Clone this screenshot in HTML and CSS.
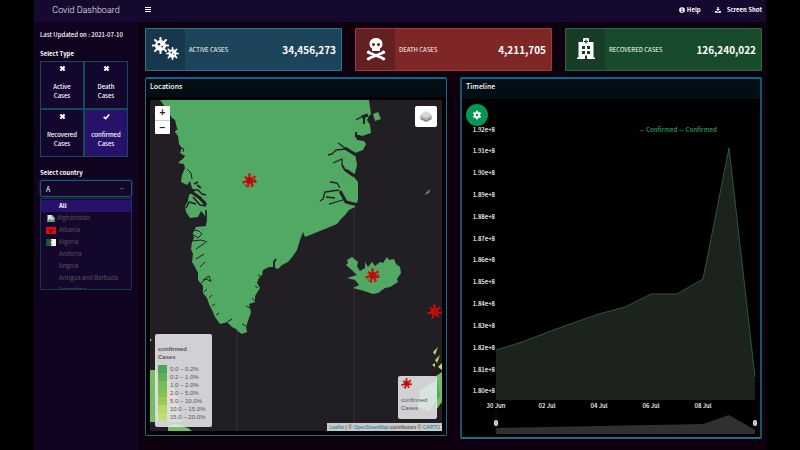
FILE: index.html
```html
<!DOCTYPE html>
<html lang="en">
<head>
<meta charset="utf-8">
<title>Covid Dashboard</title>
<link rel="stylesheet" href="styles.css">
</head>
<body>
<svg class="defs" aria-hidden="true">
  <symbol id="cross" viewBox="0 0 10 10"><path d="M2 2L8 8M8 2L2 8" stroke="#fff" stroke-width="3"/></symbol>
  <symbol id="tick" viewBox="0 0 10 10"><path d="M1 5.4L3.8 8L9 2.2" fill="none" stroke="#fff" stroke-width="2.4"/></symbol>
  <symbol id="virus" viewBox="-8 -8 16 16">
    <path d="M0 0L0 -7M0 0L5.500 -4M0 0L7 1.500M0 0L4 6M0 0L-2 6.500M0 0L-7 2M0 0L-5 -4" stroke="#cb0c0c" stroke-width="2.200"/>
    <path d="M-1.500 -6.800H1.500M4.800 -5.200L6.500 -3.200M6.900 0L6.500 2.600M-3.400 6.200L-.8 7M-7 .8L-6.400 3" stroke="#cb0c0c" stroke-width="1.500"/>
    <circle r="3.900" fill="#cb0c0c"/><path d="M-1 -2.500L.4 -.5L-1 2M2 0V1.600" stroke="#8d0a0a" fill="none"/>
    <path d="M5.500 -1.600V-.4M-4.600 4.200V5.400M2 5.800V6.800" stroke="#101010" stroke-width="1.200"/>
  </symbol>
  <symbol id="germ" viewBox="-10 -10 20 20">
    <path d="M0 -9V9M-9 0H9M-6.4 -6.4L6.4 6.4M6.4 -6.4L-6.4 6.4" stroke="#fff" stroke-width="2.4" stroke-linecap="round"/>
    <circle r="6.4" fill="#fff"/><circle cx="-1.8" cy="-1.4" r="1.5" fill="#17384c"/><circle cx="2" cy="1.4" r="1" fill="#17384c"/>
  </symbol>
</svg>
<div class="app">
  <header class="topbar">
    <h1 class="brand">Covid Dashboard</h1>
    <button class="menu" aria-label="Toggle menu"><svg viewBox="0 0 6 6"><path d="M0 .5H6M0 2.500H6M0 4.500H6" stroke="#fff" stroke-width="1"/></svg></button>
    <nav class="links">
      <a href="#help"><svg viewBox="0 0 12 12"><circle cx="6" cy="6" r="5.7" fill="#fff"/><path d="M4.6 5H6.4V9M4.4 9H7.8M5.2 3H6.8" stroke="#170930" stroke-width="1.5" fill="none"/></svg>Help</a>
      <a class="shot" href="#shot"><svg viewBox="0 0 12 12"><path d="M4.6 0H7.4V4H10L6 8L2 4H4.6ZM0 8H3.4L6 10L8.6 8H12V11.5H0Z" fill="#fff"/></svg>Screen Shot</a>
    </nav>
  </header>
  <div class="body">
    <aside class="side">
      <p class="updated">Last Updated on : 2021-07-10</p>
      <h2 class="label">Select Type</h2>
      <div class="types">
        <button><svg><use href="#cross"/></svg><span>Active<br>Cases</span></button>
        <button><svg><use href="#cross"/></svg><span>Death<br>Cases</span></button>
        <button><svg><use href="#cross"/></svg><span>Recovered<br>Cases</span></button>
        <button class="on"><svg><use href="#tick"/></svg><span>confirmed<br>Cases</span></button>
      </div>
      <label class="label country" for="country">Select country</label>
      <div class="combo">
        <input id="country" type="text" value="A" autocomplete="off">
        <ul class="options">
          <li class="picked"><span class="flag"></span>All</li>
          <li class="missing"><svg class="flag" viewBox="0 0 10 8"><path d="M1 0H6L9 3V8H1Z" fill="#d9e6ee"/><path d="M1 7L4 4L6 6L9 3V8H1Z" fill="#57a857"/><path d="M6 0V3H9" fill="#8895b5"/></svg>Afghanistan</li>
          <li><svg class="flag" viewBox="0 0 10 7"><path d="M0 0H10V7H0Z" fill="#d90b12"/><path d="M2.5 2L5 3L7.5 2L6.3 4L5 6L3.7 4Z" fill="#2a0408"/></svg>Albania</li>
          <li><svg class="flag" viewBox="0 0 10 7"><path d="M0 0H5V7H0Z" fill="#0c5c38"/><path d="M5 0H10V7H5Z" fill="#f1f1f1"/><path d="M6.2 2A1.8 1.8 0 1 0 6.2 5" fill="none" stroke="#c33"/></svg>Algeria</li>
          <li><span class="flag"></span>Andorra</li>
          <li><span class="flag"></span>Angola</li>
          <li><span class="flag"></span>Antigua and Barbuda</li>
          <li><span class="flag"></span>Argentina</li>
        </ul>
      </div>
    </aside>
    <main class="main">
      <section class="stats">
        <article class="stat active"><div class="pic"><svg viewBox="0 0 40 40"><use href="#germ" x="6" y="8" width="17" height="17"/><use href="#germ" x="20" y="18" width="13" height="13"/></svg></div><h2>ACTIVE CASES</h2><strong>34,456,273</strong></article>
        <article class="stat death"><div class="pic"><svg viewBox="0 0 40 40"><path d="M20 9C16 9 13.5 11.5 13.5 15C13.5 17.300 14.500 18.500 16 19.500V22H24V19.500C25.500 18.500 26.500 17.300 26.500 15C26.500 11.500 24 9 20 9Z" fill="#fff"/><circle cx="17.500" cy="15.500" r="1.500" fill="#641f20"/><circle cx="22.500" cy="15.500" r="1.500" fill="#641f20"/><path d="M12.500 23.500L27.500 29.500M27.500 23.500L12.500 29.500" stroke="#fff" stroke-width="2.500"/><path d="M12 23.300L12.800 22.800M28 23.300L27.200 22.800M12 29.800L12.800 30.200M28 29.800L27.200 30.200" stroke="#fff" stroke-width="2.600" stroke-linecap="round"/></svg></div><h2>DEATH CASES</h2><strong>4,211,705</strong></article>
        <article class="stat recovered"><div class="pic"><svg viewBox="0 0 40 40"><path d="M12.500 13H17V10Q17 9 18 9H22Q23 9 23 10V13H27.500V28.500H29V30H11V28.500H12.500Z" fill="#fff"/><path d="M20 10.500V14.500M18 12.500H22" stroke="#173c27" stroke-width="1.200"/><path d="M16 17H19V20H16ZM21 17H24V20H21ZM16 22H19V25H16ZM21 22H24V25H21ZM19 26.500H21V30H19Z" fill="#173c27"/></svg></div><h2>RECOVERED CASES</h2><strong>126,240,022</strong></article>
      </section>
      <section class="panels">
        <article class="panel">
          <h2 class="title">Locations</h2>
          <div class="map">
            <svg class="land" viewBox="0 0 292 331" preserveAspectRatio="xMidYMid slice">
              <path d="M87 230V331M204 98V331" stroke="#35333a" fill="none"/>
              <path fill="#52a964" d="M10 0L16 8L22 18L25 20L27 28L25 32L28 36L29 44L32 48L30 53L35 56L31 60L28 63L34 64L35 68L32 75L31 82L37 85L40 81L42 88L45 91L39 95L38 101L35 106L36 112L40 118L48 117L51 111L56 117V126L46 127L43 133L44 138L42 142L41 149L43 154L42 162L45 167L48 173V180L53 186V193L57 198L59 204L62 210L65 217L70 224L74 223L78 223L82 227L86 229L89 232L92 234L97 232L96 227L99 218L101 212L99 204L105 202L105 196L110 188L107 183L109 178L112 175L113 170L119 167L123 167L128 169L132 165L138 162L143 156L147 150L150 140L153 132L155 137L160 135L175 129L187 124L191 119L195 115L199 110L205 107L208 100L208 82L204 77L207 65L205 53L213 50L216 44L214 41L207 40L205 34L212 36L221 33L220 25L217 20L219 16L221 14L220 7L219 0Z"/>
              <g fill="none" stroke="#211f23" stroke-linejoin="round">
                <path stroke-width="1.600" d="M40 90L48 90L52 94L56 95M44 84L48 82M47 85L51 88M43 97L50 105L56 106M49 98L55 102M56 110V122L54 126M36 108L39 102L46 104"/>
                <path stroke-width="3" d="M40 91L50 98L56 105"/>
                <path d="M37 69L41 73L42 79M25 30L28 29M29 47L34 49L33 52M31 60L35 56M44 130L49 131L52 134L48 138L44 135M42 141L51 140L57 142M46 149L55 143M46 159L54 154M50 167L55 162M51 183L56 179L60 181M53 180L59 176L61 182M54 192L57 189M59 198L62 195M62 206L65 204M66 215L69 213M74 224L82 219M96 226L92 224M100 208L96 206M105 201L102 198M108 188L105 186M112 177L108 175"/>
                <path stroke-width="1.300" d="M206 20L213 16L218 16M205 54L196 49L191 45L188 43M196 49L186 50L182 54L178 55M192 65L192 59L183 63M190 88L187 83L180 82M189 90L175 92L173 99L170 101M196 99L186 102L179 104M176 97L185 98"/>
                <path stroke-width="2" d="M214 17V24M206 37V32M206 76L195 70L192 65M124 168V162L126 159"/>
                <path stroke-width="3" d="M208 105L196 102L190 91M204 76L196 70M206 55L195 48M206 36L212 38M212 17L218 15"/>
              </g>
              <path fill="#52a964" d="M223 14L228 12L231 19L225 21ZM274 95L280 89L279 93ZM198 163L197 160L202 157L208 162L207 166L210 171L215 168V162L218 167L222 162L225 166L230 162L233 163L237 157L239 160L244 159L246 164L250 167L251 173L247 179L248 182L240 187L235 188L228 193L223 194L214 191L203 188L209 185L205 180L197 178L207 175L203 171L196 165Z"/>
              <path fill="#74bd62" d="M0 270H5V322H0ZM18 326L25 324L38 328L42 331H18ZM286 276L292 272V302L286 310ZM0 238L2 241H0Z"/>
              <path fill="#b7dc70" d="M283 252L288 247L285 255ZM285 260L290 255L287 263ZM288 267L292 263V270ZM282 265L285 263V267Z"/>
              <path fill="#52a964" d="M270 291L282 282L288 281L290 296L279 311L268 307Z"/>
              <path fill="#96cb5e" d="M4 270L20 281L28 297L31 322L6 321Z" opacity=".6"/><path fill="#e34b42" d="M15 292L22 289L25 296L20 304L14 300Z"/>
              <use href="#virus" x="92" y="73" width="15" height="15"/><use href="#virus" x="215" y="168" width="15" height="15"/><use href="#virus" x="277" y="204" width="15" height="15"/>
            </svg>
            <div class="zoomer"><button aria-label="Zoom in">+</button><button aria-label="Zoom out">−</button></div>
            <button class="layers" aria-label="Layers"><svg viewBox="0 0 14 14"><path d="M1 7L7 10L13 7V10L7 13L1 10Z" fill="#878787"/><path d="M1 5L7 8L13 5V8L7 11L1 8Z" fill="#b4b4b4"/><path d="M7 1L13 4.500L7 8L1 4.500Z" fill="#d6d6d6"/></svg></button>
            <div class="legend">
              <h3>confirmed<br>Cases</h3>
              <div class="scale"><i></i><ul><li>0.0 – 0.2%</li><li>0.2 – 1.0%</li><li>1.0 – 2.0%</li><li>2.0 – 5.0%</li><li>5.0 – 10.0%</li><li>10.0 – 15.0%</li><li>15.0 – 20.0%</li></ul></div>
            </div>
            <div class="key"><svg><use href="#virus"/></svg><p>confirmed<br>Cases</p></div>
            <p class="credit"><a href="#leaflet">Leaflet</a> | © <a href="#osm">OpenStreetMap</a> contributors © <a href="#carto">CARTO</a></p>
          </div>
        </article>
        <article class="panel timeline">
          <h2 class="title">Timeline</h2>
          <div class="chart">
            <button class="gear" aria-label="Chart settings"><svg viewBox="-6 -6 12 12"><path d="M0 -5V5M-4.300 -2.500L4.300 2.500M4.300 -2.500L-4.300 2.500" stroke="#fff" stroke-width="2.600"/><circle r="3.700" fill="#fff"/><circle r="1.500" fill="#079653"/></svg></button>
            <svg class="plot" viewBox="462 99 298 338">
              <g class="ylab"><text x="495" y="132">1.92e+8</text><text x="495" y="153">1.91e+8</text><text x="495" y="175">1.90e+8</text><text x="495" y="197">1.89e+8</text><text x="495" y="219">1.88e+8</text><text x="495" y="241">1.87e+8</text><text x="495" y="262">1.86e+8</text><text x="495" y="284">1.85e+8</text><text x="495" y="306">1.84e+8</text><text x="495" y="328">1.83e+8</text><text x="495" y="350">1.82e+8</text><text x="495" y="372">1.81e+8</text><text x="495" y="393">1.80e+8</text></g>
              <text class="series" x="678" y="132">— Confirmed — Confirmed</text>
              <path fill="#1c231c" d="M496 400V350L522 342L548 332L573 323L599 314L625 307L651 294H677L703 279L729 148L755 377V400Z"/>
              <path fill="none" stroke="#28593b" d="M496 350L522 342L548 332L573 323L599 314L625 307L651 294H677L703 279L729 148L755 377"/>
              <g class="xlab"><text x="496" y="408">30 Jun</text><text x="547" y="408">02 Jul</text><text x="599" y="408">04 Jul</text><text x="651" y="408">06 Jul</text><text x="703" y="408">08 Jul</text></g>
              <path fill="#303033" d="M496 434V428L548 427L651 425L703 424L729 415L755 430V434Z"/>
              <path stroke="#161616" d="M496 412V434"/>
              <g fill="#b9b9b9" stroke="#e5e5e5"><rect x="494.500" y="420.500" width="3" height="5" rx="1"/><rect x="753.500" y="420.500" width="3" height="5" rx="1"/></g>
            </svg>
          </div>
        </article>
      </section>
    </main>
  </div>
</div>
</body>
</html>
```
FILE: styles.css
```css
* { box-sizing: border-box; margin: 0; padding: 0; }
body { background: #000; color: #fff; font: 6px/10px "Noto Sans CJK SC", "Noto Sans", sans-serif; }
button, input { font: inherit; color: inherit; border: 0; background: none; }
a { color: inherit; text-decoration: none; }
ul { list-style: none; }
svg { display: block; }
.defs { position: absolute; width: 0; height: 0; }
.app { margin: 0 34px; min-height: 100vh; display: flex; flex-direction: column; background: #0f0010; }
.topbar { display: flex; align-items: center; height: 22px; padding: 0 4px 3px 0; background: #160930; }
.brand { width: 104px; text-align: center; color: #f2eff6; font: 300 9px/18px Roboto, sans-serif; }
.menu { margin-left: 6px; padding: 1px; }
.menu svg { width: 6px; height: 6px; }
.links { display: flex; gap: 14px; margin-left: auto; font-weight: 700; line-height: 18px; }
.links a { display: flex; align-items: center; gap: 2px; }
.links a.shot { gap: 6px; }
.links svg { width: 6px; height: 6px; }
.body { display: flex; flex: 1; }
.side { width: 104px; flex: none; padding: 8px 6px; background: #100320; }
.updated { font-weight: 500; white-space: nowrap; }
.label { display: block; margin-top: 9px; font-size: 6px; font-weight: 700; line-height: 10px; }
.types { display: grid; grid-template-columns: 1fr 1fr; width: 88px; margin-top: 2px; }
.types button { display: flex; flex-direction: column; align-items: center; gap: 10px; height: 48px; padding-top: 3px; border: 1px solid #174a58; background: #14072f; font-weight: 500; line-height: 9px; }
.types button.on { background: #27116a; }
.types svg { width: 7px; height: 7px; }
.label.country { margin-top: 11px; }
.combo { position: relative; width: 92px; margin-top: 2px; }
.combo::after { content: ""; position: absolute; top: 8px; right: 8px; width: 4px; height: 1px; background: #4d4963; }
.combo input { display: block; width: 100%; height: 17px; padding: 0 5px; border: 1px solid #1c5b70; border-radius: 2px; background: #14072b; outline: 0; box-shadow: 0 0 3px #164155; font-size: 7px; }
.options { position: absolute; top: 18px; left: 0; width: 100%; height: 92px; overflow: hidden; padding-top: 1px; border: 1px solid #16384b; background: #14072c; color: #59545c; }
.options li { display: flex; align-items: center; gap: 3px; height: 12px; padding-left: 5px; white-space: nowrap; }
.options .picked { background: #27116a; color: #fff; font-weight: 700; }
.options .missing { gap: 1px; }
.flag { width: 10px; height: 7px; flex: none; }
.main { flex: 1; min-width: 0; padding: 6px 4px 11px 7px; display: flex; flex-direction: column; gap: 6px; }
.stats { display: grid; grid-template-columns: repeat(3, 1fr); gap: 13px; }
.stat { display: flex; align-items: center; height: 43px; padding-right: 5px; border: 1px solid; border-radius: 1px; }
.stat .pic { width: 39px; height: 41px; }
.stat .pic svg { width: 40px; height: 40px; }
.stat h2 { margin-left: 4px; font-size: 6px; font-weight: 400; line-height: 10px; white-space: nowrap; }
.stat strong { margin-left: auto; font-size: 10px; font-weight: 700; line-height: 16px; }
.active { background: #1c455c; border-color: #257995; } .active .pic { background: #17384c; }
.death { background: #7f2726; border-color: #973e3d; } .death .pic { background: #641f20; }
.recovered { background: #184b2c; border-color: #276a48; } .recovered .pic { background: #173c27; }
.panels { flex: 1; display: grid; grid-template-columns: 1fr 1fr; gap: 13px; }
.panel { display: flex; flex-direction: column; min-width: 0; border: 1px solid #216b83; border-top: 2px solid #086890; border-radius: 2px; background: #000; margin-bottom: 3px; }
.panel.timeline { margin-bottom: 0; border-width: 2px; border-color: #086890 #1c5267 #216b83; }
.title { height: 18px; padding-left: 4px; background: #030e14; font-size: 7px; font-weight: 500; line-height: 15px; }
.timeline .title { height: 20px; }
.map { position: relative; flex: 1; margin: 3px 4px 4px; overflow: hidden; background: #211f23; font: 6px/8px "Liberation Sans", sans-serif; }
.land { position: absolute; width: 100%; height: 100%; }
.zoomer { position: absolute; top: 6px; left: 5px; width: 15px; border-radius: 1px; overflow: hidden; background: #fff; }
.zoomer button { display: block; width: 100%; height: 14px; color: #222; font-size: 10px; font-weight: 700; line-height: 14px; }
.zoomer button + button { border-top: 1px solid #ccc; }
.layers { position: absolute; top: 6px; right: 5px; width: 22px; height: 21px; padding: 4px; border-radius: 2px; background: #fff; }
.layers svg { width: 14px; height: 13px; }
.legend, .key { position: absolute; border-radius: 2px; background: rgba(238, 238, 242, .86); color: #555; }
.legend { left: 5px; bottom: 4px; width: 57px; padding: 11px 3px 6px; }
.legend h3 { margin-bottom: 4px; font-size: 6px; line-height: 8px; }
.scale { display: flex; gap: 3px; white-space: nowrap; }
.scale i { width: 9px; background: linear-gradient(#4aa65a 0 15%, #5fb05a 15% 29%, #79bd58 29% 45%, #82c44b 45% 58%, #9aca55 58% 72%, #b5d668 72% 86%, #c5de74 86%); }
.key { right: 5px; bottom: 12px; width: 39px; height: 43px; padding: 2px 3px; }
.key svg { width: 11px; height: 11px; }
.key p { margin-top: 7px; }
.credit { position: absolute; right: 0; bottom: 0; padding: 0 2px; background: rgba(245, 245, 245, .8); color: #333; font-size: 5px; line-height: 8px; white-space: nowrap; }
.credit a { color: #0078a8; }
.chart { position: relative; flex: 1; }
.gear { position: absolute; top: 5px; left: 4px; display: grid; place-items: center; width: 22px; height: 22px; border-radius: 50%; background: #079653; }
.gear svg { width: 10px; height: 10px; }
.plot { width: 100%; }
.plot text { font-size: 6px; font-weight: 500; fill: #fff; }
.ylab text { text-anchor: end; }
.xlab text, .plot .series { text-anchor: middle; }
.plot .series { fill: #258650; font-weight: 700; }
```
